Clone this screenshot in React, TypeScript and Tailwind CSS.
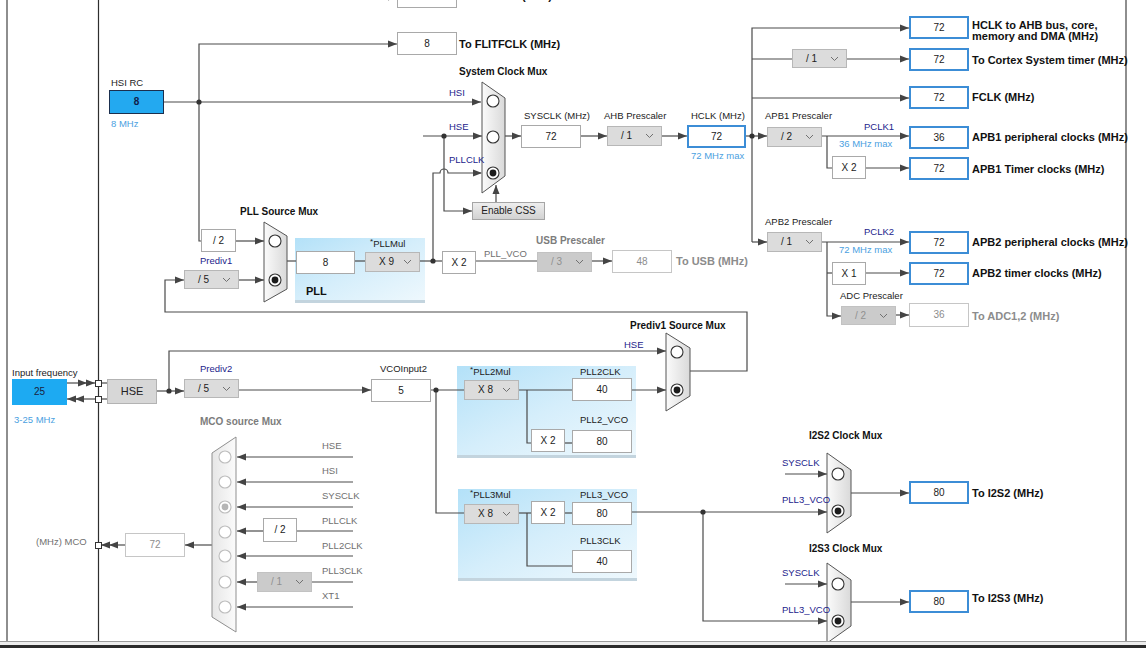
import React from 'react'

type Kind = 'val' | 'dval' | 'out' | 'drop' | 'dis' | 'blue' | 'hsi' | 'hse' | 'btn'
type Box = [number, number, number, number, string, Kind]
type Tone = 'n' | 'g' | 'v' | 'b' | 't' | 'tg' | 'o' | 'og' | 'p'
type Lbl = [number, number, string, Tone]
type Wire = { p: number[]; a?: 1 | 2 }

const kindClass: Record<Kind, string> = {
  val: 'border border-[#a9a9a9] bg-white text-[#222] justify-center',
  dval: 'border border-[#c6c6c6] bg-white text-[#8d8d8d] justify-center',
  out: 'border-[2.5px] border-[#3c8dd6] bg-white text-[#222] justify-center',
  drop: 'border border-[#b7b7b7] bg-[#dcdcdc] text-[#222] justify-between pl-[13px] pr-[7px]',
  dis: 'border border-[#c2c2c2] bg-[#cbcbcb] text-[#909090] justify-between pl-[13px] pr-[7px]',
  blue: 'bg-[#1daaf2] text-[#1a2340] justify-center',
  hsi: 'border border-[#1b2f4e] bg-[#23a9f0] text-[#10204a] font-bold justify-center',
  hse: 'border border-[#b3b3b3] bg-[#d7d7d7] text-[#222] text-[11px] justify-center',
  btn: 'border border-[#a5a5a5] bg-linear-to-b from-[#eeeeee] to-[#d2d2d2] text-[#222] text-[9px] justify-center',
}

const toneClass: Record<Tone, string> = {
  n: 'text-[9.5px] text-[#222]',
  g: 'text-[9.5px] text-[#707070]',
  v: 'text-[9.5px] text-[#23238c]',
  b: 'text-[9.5px] text-[#4b9fdf]',
  t: 'text-[10px] font-bold text-[#111]',
  tg: 'text-[10px] font-bold text-[#7c7c7c]',
  o: 'text-[11px] font-bold text-[#111]',
  og: 'text-[11px] font-bold text-[#8c8c8c]',
  p: 'text-[11px] font-bold text-[#111]',
}

const panels: [number, number, number, number][] = [
  [295, 238, 130, 65],
  [457, 366, 179, 92],
  [458, 489, 179, 92],
]

const boxes: Box[] = [
  [397, -16, 60, 24, '', 'val'],
  [397, 32, 60, 23, '8', 'val'],
  [109, 90, 55, 24, '8', 'hsi'],
  [521, 125, 60, 23, '72', 'val'],
  [607, 126, 55, 20, '/ 1', 'drop'],
  [687, 125, 59, 23, '72', 'out'],
  [909, 16, 60, 23, '72', 'out'],
  [792, 49, 55, 19, '/ 1', 'drop'],
  [909, 48, 60, 23, '72', 'out'],
  [909, 86, 60, 23, '72', 'out'],
  [767, 127, 55, 20, '/ 2', 'drop'],
  [909, 126, 60, 23, '36', 'out'],
  [832, 156, 34, 23, 'X 2', 'val'],
  [909, 157, 60, 23, '72', 'out'],
  [767, 232, 55, 20, '/ 1', 'drop'],
  [909, 231, 60, 23, '72', 'out'],
  [832, 262, 34, 23, 'X 1', 'val'],
  [909, 262, 60, 23, '72', 'out'],
  [841, 306, 55, 19, '/ 2', 'dis'],
  [909, 303, 60, 24, '36', 'dval'],
  [472, 202, 73, 18, 'Enable CSS', 'btn'],
  [201, 229, 35, 23, '/ 2', 'val'],
  [184, 270, 55, 19, '/ 5', 'drop'],
  [296, 251, 59, 23, '8', 'val'],
  [365, 252, 55, 20, 'X 9', 'drop'],
  [442, 251, 34, 23, 'X 2', 'val'],
  [537, 252, 55, 20, '/ 3', 'dis'],
  [612, 250, 60, 23, '48', 'dval'],
  [12, 379, 55, 26, '25', 'blue'],
  [107, 379, 50, 25, 'HSE', 'hse'],
  [184, 379, 55, 19, '/ 5', 'drop'],
  [371, 379, 60, 23, '5', 'val'],
  [464, 380, 55, 20, 'X 8', 'drop'],
  [572, 378, 60, 23, '40', 'val'],
  [531, 429, 34, 23, 'X 2', 'val'],
  [572, 430, 60, 23, '80', 'val'],
  [464, 504, 55, 20, 'X 8', 'drop'],
  [531, 501, 34, 23, 'X 2', 'val'],
  [572, 502, 60, 23, '80', 'val'],
  [572, 550, 60, 23, '40', 'val'],
  [909, 481, 60, 23, '80', 'out'],
  [909, 590, 60, 23, '80', 'out'],
  [263, 518, 34, 24, '/ 2', 'val'],
  [257, 572, 55, 20, '/ 1', 'dis'],
  [125, 533, 60, 24, '72', 'dval'],
]

const labels: Lbl[] = [
  [522, -4, '(MHz)', 'o'],
  [111, 83, 'HSI RC', 'n'],
  [111, 124, '8 MHz', 'b'],
  [459, 44, 'To FLITFCLK (MHz)', 'o'],
  [459, 72, 'System Clock Mux', 't'],
  [449, 93, 'HSI', 'v'],
  [449, 127, 'HSE', 'v'],
  [449, 160, 'PLLCLK', 'v'],
  [524, 116, 'SYSCLK (MHz)', 'n'],
  [604, 116, 'AHB Prescaler', 'n'],
  [691, 116, 'HCLK (MHz)', 'n'],
  [691, 156, '72 MHz max', 'b'],
  [765, 116, 'APB1 Prescaler', 'n'],
  [864, 127, 'PCLK1', 'v'],
  [839, 144, '36 MHz max', 'b'],
  [765, 222, 'APB2 Prescaler', 'n'],
  [864, 232, 'PCLK2', 'v'],
  [839, 250, '72 MHz max', 'b'],
  [840, 296, 'ADC Prescaler', 'n'],
  [972, 25, 'HCLK to AHB bus, core,', 'o'],
  [972, 36, 'memory and DMA (MHz)', 'o'],
  [972, 60, 'To Cortex System timer (MHz)', 'o'],
  [972, 97, 'FCLK (MHz)', 'o'],
  [972, 137, 'APB1 peripheral clocks (MHz)', 'o'],
  [972, 169, 'APB1 Timer clocks (MHz)', 'o'],
  [972, 242, 'APB2 peripheral clocks (MHz)', 'o'],
  [972, 273, 'APB2 timer clocks (MHz)', 'o'],
  [972, 316, 'To ADC1,2 (MHz)', 'og'],
  [240, 212, 'PLL Source Mux', 't'],
  [200, 261, 'Prediv1', 'v'],
  [370, 244, '*PLLMul', 'n'],
  [306, 291, 'PLL', 'p'],
  [484, 254, 'PLL_VCO', 'g'],
  [536, 241, 'USB Prescaler', 'tg'],
  [676, 261, 'To USB (MHz)', 'og'],
  [630, 326, 'Prediv1 Source Mux', 't'],
  [624, 345, 'HSE', 'v'],
  [12, 373, 'Input frequency', 'n'],
  [14, 420, '3-25 MHz', 'b'],
  [200, 369, 'Prediv2', 'v'],
  [380, 369, 'VCOInput2', 'n'],
  [470, 372, '*PLL2Mul', 'n'],
  [580, 372, 'PLL2CLK', 'n'],
  [580, 420, 'PLL2_VCO', 'n'],
  [470, 495, '*PLL3Mul', 'n'],
  [580, 495, 'PLL3_VCO', 'n'],
  [580, 541, 'PLL3CLK', 'n'],
  [809, 436, 'I2S2 Clock Mux', 't'],
  [782, 463, 'SYSCLK', 'v'],
  [782, 500, 'PLL3_VCO', 'v'],
  [972, 493, 'To I2S2 (MHz)', 'o'],
  [809, 549, 'I2S3 Clock Mux', 't'],
  [782, 573, 'SYSCLK', 'v'],
  [782, 610, 'PLL3_VCO', 'v'],
  [972, 598, 'To I2S3 (MHz)', 'o'],
  [200, 422, 'MCO source Mux', 'tg'],
  [322, 446, 'HSE', 'g'],
  [322, 471, 'HSI', 'g'],
  [322, 496, 'SYSCLK', 'g'],
  [322, 521, 'PLLCLK', 'g'],
  [322, 546, 'PLL2CLK', 'g'],
  [322, 571, 'PLL3CLK', 'g'],
  [322, 596, 'XT1', 'g'],
  [36, 542, '(MHz) MCO', 'g'],
]

const mcoRows = [457, 482, 507, 531, 556, 582, 607]

const wires: Wire[] = [
  { p: [360, -3, 397, -3], a: 1 },
  { p: [164, 102, 481, 102], a: 1 },
  { p: [201, 241, 199, 241, 199, 44, 397, 44], a: 1 },
  { p: [236, 241, 264, 241], a: 1 },
  { p: [239, 280, 264, 280], a: 1 },
  { p: [690, 371, 747, 371, 747, 312, 165, 312, 165, 280, 184, 280], a: 1 },
  { p: [287, 261, 296, 261] },
  { p: [355, 261, 365, 261] },
  { p: [420, 261, 442, 261] },
  { p: [423, 136, 482, 136], a: 1 },
  { p: [444, 136, 444, 211, 472, 211], a: 1 },
  { p: [496, 202, 496, 185], a: 1 },
  { p: [505, 136, 521, 136], a: 1 },
  { p: [581, 136, 607, 136], a: 1 },
  { p: [662, 136, 687, 136], a: 1 },
  { p: [746, 136, 767, 136], a: 1 },
  { p: [752, 242, 752, 28, 909, 28], a: 1 },
  { p: [752, 242, 767, 242], a: 1 },
  { p: [752, 59, 792, 59] },
  { p: [847, 59, 909, 59], a: 1 },
  { p: [752, 98, 909, 98], a: 1 },
  { p: [822, 136, 909, 136], a: 1 },
  { p: [827, 136, 827, 168, 832, 168] },
  { p: [866, 168, 909, 168], a: 1 },
  { p: [822, 242, 909, 242], a: 1 },
  { p: [827, 242, 827, 316, 841, 316], a: 1 },
  { p: [827, 273, 832, 273] },
  { p: [866, 273, 909, 273], a: 1 },
  { p: [896, 315, 909, 315], a: 1 },
  { p: [476, 261, 537, 261] },
  { p: [592, 261, 612, 261], a: 1 },
  { p: [67, 383, 95, 383], a: 2 },
  { p: [95, 399, 67, 399], a: 2 },
  { p: [101, 383, 107, 383] },
  { p: [101, 399, 107, 399] },
  { p: [157, 391, 184, 391], a: 1 },
  { p: [169, 391, 169, 351, 666, 351], a: 1 },
  { p: [239, 390, 371, 390], a: 1 },
  { p: [431, 390, 464, 390] },
  { p: [436, 390, 436, 513, 464, 513] },
  { p: [519, 390, 572, 390] },
  { p: [527, 390, 527, 443, 531, 443] },
  { p: [565, 443, 572, 443] },
  { p: [632, 390, 666, 390], a: 1 },
  { p: [519, 513, 531, 513] },
  { p: [527, 513, 527, 566, 572, 566] },
  { p: [565, 513, 572, 513] },
  { p: [632, 512, 827, 512], a: 1 },
  { p: [703, 512, 703, 621, 827, 621], a: 1 },
  { p: [785, 474, 827, 474], a: 1 },
  { p: [785, 584, 827, 584], a: 1 },
  { p: [851, 493, 909, 493], a: 1 },
  { p: [851, 602, 909, 602], a: 1 },
  { p: [212, 545, 185, 545], a: 1 },
  { p: [125, 545, 101, 545], a: 2 },
  ...mcoRows.flatMap((y): Wire[] =>
    y === 531
      ? [{ p: [353, y, 297, y] }, { p: [263, y, 237, y], a: 1 }]
      : y === 582
        ? [{ p: [353, y, 312, y] }, { p: [257, y, 237, y], a: 1 }]
        : [{ p: [353, y, 237, y], a: 1 }],
  ),
]

const muxes: { pts: string; dis?: boolean }[] = [
  { pts: '482,82 505,98 505,176 482,193' },
  { pts: '264,222 287,236 287,289 264,302' },
  { pts: '666,333 690,348 690,396 666,411' },
  { pts: '827,453 851,470 851,516 827,533' },
  { pts: '827,563 851,580 851,626 827,643' },
  { pts: '236,437 212,453 212,617 236,632', dis: true },
]

const radios: [number, number, boolean, boolean?][] = [
  [493, 101, false],
  [493, 137, false],
  [493, 173, true],
  [275, 241, false],
  [275, 280, true],
  [677, 352, false],
  [677, 390, true],
  [838, 474, false],
  [838, 511, true],
  [838, 584, false],
  [838, 621, true],
  ...mcoRows.map((y, i): [number, number, boolean, boolean] => [225, y + (i === 3 ? 1 : 0), i === 2, true]),
]

const dots: [number, number][] = [
  [199, 102], [444, 136], [433, 261], [752, 136], [169, 391], [436, 390], [703, 512],
]

function heads(p: number[], n: number) {
  const x2 = p[p.length - 2]
  const y2 = p[p.length - 1]
  const x1 = p[p.length - 4]
  const y1 = p[p.length - 3]
  const L = Math.hypot(x2 - x1, y2 - y1) || 1
  const dx = (x2 - x1) / L
  const dy = (y2 - y1) / L
  const tri = (tx: number, ty: number) =>
    `${tx},${ty} ${tx - 9 * dx - 3.5 * dy},${ty - 9 * dy + 3.5 * dx} ${tx - 9 * dx + 3.5 * dy},${ty - 9 * dy - 3.5 * dx}`
  const out = [tri(x2, y2)]
  if (n === 2) out.push(tri(x2 - 8 * dx, y2 - 8 * dy))
  return out
}

function Chevron() {
  return (
    <svg width="9" height="6" viewBox="0 0 9 6" className="text-[#707070]">
      <polyline points="1,1 4.5,4.5 8,1" fill="none" stroke="currentColor" strokeWidth="1" />
    </svg>
  )
}

function Diagram() {
  return (
    <svg width="1146" height="641" className="absolute left-0 top-0">
      <defs>
        <linearGradient id="mx" x1="0" y1="0" x2="1" y2="0">
          <stop offset="0" stopColor="#fbfbfb" />
          <stop offset="1" stopColor="#d9d9d9" />
        </linearGradient>
        <linearGradient id="mxd" x1="0" y1="0" x2="1" y2="0">
          <stop offset="0" stopColor="#e6e6e6" />
          <stop offset="1" stopColor="#fbfbfb" />
        </linearGradient>
      </defs>
      <line x1="98.5" y1="0" x2="98.5" y2="641" stroke="#2e2e2e" strokeWidth="1.2" />
      {wires.map((w, i) => (
        <g key={i}>
          <polyline points={w.p.join(' ')} fill="none" stroke="#4a4a4a" strokeWidth="1.2" />
          {w.a && heads(w.p, w.a).map((t, j) => <polygon key={j} points={t} fill="#444" />)}
        </g>
      ))}
      <path d="M433,261 V173 H440 A4,4 0 0 1 448,173 H481" fill="none" stroke="#4a4a4a" strokeWidth="1.2" />
      <polygon points="482,173 473,169.5 473,176.5" fill="#444" />
      {muxes.map((m, i) => (
        <polygon
          key={i}
          points={m.pts}
          fill={m.dis ? 'url(#mxd)' : 'url(#mx)'}
          stroke={m.dis ? '#8f8f8f' : '#555'}
          strokeWidth="1"
        />
      ))}
      {radios.map(([cx, cy, sel, dis], i) => (
        <g key={i}>
          <circle cx={cx} cy={cy} r="6" fill="#fff" stroke={dis ? '#bdbdbd' : '#333'} strokeWidth="1.1" />
          {sel && <circle cx={cx} cy={cy} r="3.4" fill={dis ? '#b5b5b5' : '#1c1c1c'} />}
        </g>
      ))}
      {dots.map(([cx, cy], i) => (
        <circle key={i} cx={cx} cy={cy} r="2.6" fill="#333" />
      ))}
      {[380, 396, 542].map((y) => (
        <rect key={y} x="95.5" y={y + 0.5} width="6" height="6" fill="#fff" stroke="#333" strokeWidth="1" />
      ))}
    </svg>
  )
}

export default function App() {
  return (
    <div className="relative flex h-[648px] w-[1146px] flex-col overflow-hidden bg-white font-['Liberation_Sans',Arial,sans-serif]">
      <div className="flex flex-1">
        <div className="w-[6px]" />
        <div className="w-[1121px] border-x-2 border-[#8e8e8e]" />
      </div>
      <div className="h-px bg-[#9a9a9a]" />
      <div className="h-[3px] bg-[#ececec]" />
      <div className="h-[3px] bg-[#2a2a2a]" />

      <div className="absolute inset-0">
        {panels.map(([x, y, w, h], i) => (
          <div
            key={i}
            className="absolute border-b-[3px] border-[#c3d4de] bg-linear-to-br from-[#b3e1f8] via-[#d5eefb] to-[#eef8fd]"
            style={{ left: x, top: y, width: w, height: h }}
          />
        ))}
        <Diagram />
        {boxes.map(([x, y, w, h, t, k], i) => (
          <div
            key={i}
            className={`absolute flex items-center text-[10px] leading-none ${kindClass[k]}`}
            style={{ left: x, top: y, width: w, height: h }}
          >
            <span>{t}</span>
            {(k === 'drop' || k === 'dis') && <Chevron />}
          </div>
        ))}
        {labels.map(([x, y, t, tone], i) => (
          <div
            key={i}
            className={`absolute -translate-y-1/2 whitespace-nowrap leading-none ${toneClass[tone]}`}
            style={{ left: x, top: y }}
          >
            {t.startsWith('*') ? (
              <>
                <span className="relative -top-[3px] text-[8px]">*</span>
                {t.slice(1)}
              </>
            ) : (
              t
            )}
          </div>
        ))}
      </div>
    </div>
  )
}
